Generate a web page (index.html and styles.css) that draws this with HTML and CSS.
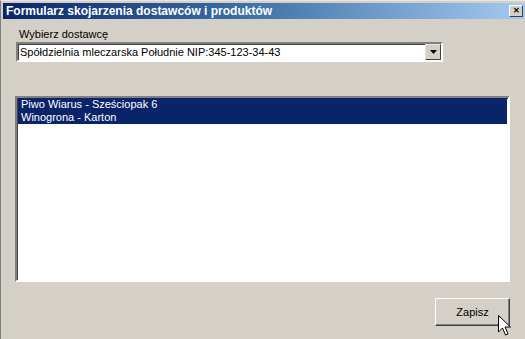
FILE: index.html
```html
<!DOCTYPE html>
<html lang="pl">
<head>
    <meta charset="UTF-8">
    <title>Formularz skojarzenia dostawców i produktów</title>
    <link rel="stylesheet" href="styles.css">
</head>
<body>
    <div class="window">
        <div class="titlebar">
            <span class="title">Formularz skojarzenia dostawców i produktów</span>
            <span class="close">&#x2715;</span>
        </div>
        <div class="content">
            <label class="label">Wybierz dostawcę</label>
            <div class="combo">
                <span class="combo-text">Spółdzielnia mleczarska Południe NIP:345-123-34-43</span>
                <span class="combo-btn">
                    <svg width="7" height="4" viewBox="0 0 7 4"><path d="M0 0h7L3.5 4z" fill="#000"/></svg>
                </span>
            </div>
            <div class="listbox">
                <div class="item selected">Piwo Wiarus - Sześciopak 6</div>
                <div class="item selected">Winogrona - Karton</div>
            </div>
            <div class="actions">
                <button class="btn">Zapisz</button>
            </div>
        </div>
        <svg class="cursor" width="13" height="22" viewBox="0 0 13 22">
            <path d="M0.5 0.5v16.5l4-4 3 7 2.5-1-3-7h5.5z" fill="#fff" stroke="#000" stroke-width="1"/>
        </svg>
    </div>
</body>
</html>
```

FILE: styles.css
```css
* {
    margin: 0;
    padding: 0;
    box-sizing: border-box;
}

body {
    background: #d4d0c8;
    font-family: "Liberation Sans", Arial, sans-serif;
    font-size: 11px;
    color: #000;
}

.window {
    position: relative;
    width: 525px;
    height: 339px;
    padding: 2px 0 0 2px;
    border-left: 1px solid #808080;
    border-top: 1px solid #e8e6e0;
    display: flex;
    flex-direction: column;
    overflow: hidden;
}

.titlebar {
    height: 16px;
    background: linear-gradient(90deg, #0a246a 0%, #3a6ea5 45%, #a6caf0 100%);
    display: flex;
    align-items: center;
    justify-content: space-between;
    padding: 0 2px 0 3px;
}

.title {
    color: #fff;
    font-weight: bold;
    font-size: 12px;
}

.close {
    width: 14px;
    height: 12px;
    background: #d4d0c8;
    border: 1px solid;
    border-color: #fff #404040 #404040 #fff;
    font-size: 8px;
    font-weight: bold;
    line-height: 10px;
    text-align: center;
    color: #000;
}

.content {
    flex: 1;
    display: flex;
    flex-direction: column;
    padding: 8px 12px 0 12px;
}

.label {
    padding-left: 4px;
    height: 14px;
    line-height: 14px;
    margin-bottom: 1px;
}

.combo {
    margin-left: 1px;
    width: 427px;
    height: 20px;
    background: #fff;
    border: 2px solid;
    border-color: #808080 #fff #fff #808080;
    box-shadow: inset 1px 1px 0 #404040;
    display: flex;
    align-items: center;
    justify-content: space-between;
}

.combo-text {
    padding-left: 2px;
}

.combo-btn {
    width: 16px;
    height: 16px;
    background: #d4d0c8;
    border: 1px solid;
    border-color: #e8e6e0 #404040 #404040 #e8e6e0;
    display: flex;
    align-items: center;
    justify-content: center;
}

.listbox {
    margin-top: 34px;
    width: 495px;
    height: 186px;
    background: #fff;
    border: 2px solid;
    border-color: #808080 #fff #fff #808080;
    box-shadow: inset 1px 1px 0 #404040;
    padding: 0 1px 0 1px;
}

.item {
    height: 13px;
    line-height: 13px;
    padding-left: 3px;
}

.item.selected {
    background: #0a246a;
    color: #fff;
}

.actions {
    display: flex;
    justify-content: flex-end;
    width: 495px;
    margin-top: 16px;
}

.btn {
    width: 75px;
    height: 28px;
    background: #d4d0c8;
    border: 1px solid;
    border-color: #fff #404040 #404040 #fff;
    box-shadow: inset -1px -1px 0 #808080;
    font-family: "Liberation Sans", Arial, sans-serif;
    font-size: 11px;
    color: #000;
}

.cursor {
    position: absolute;
    left: 497px;
    top: 314px;
}
```
